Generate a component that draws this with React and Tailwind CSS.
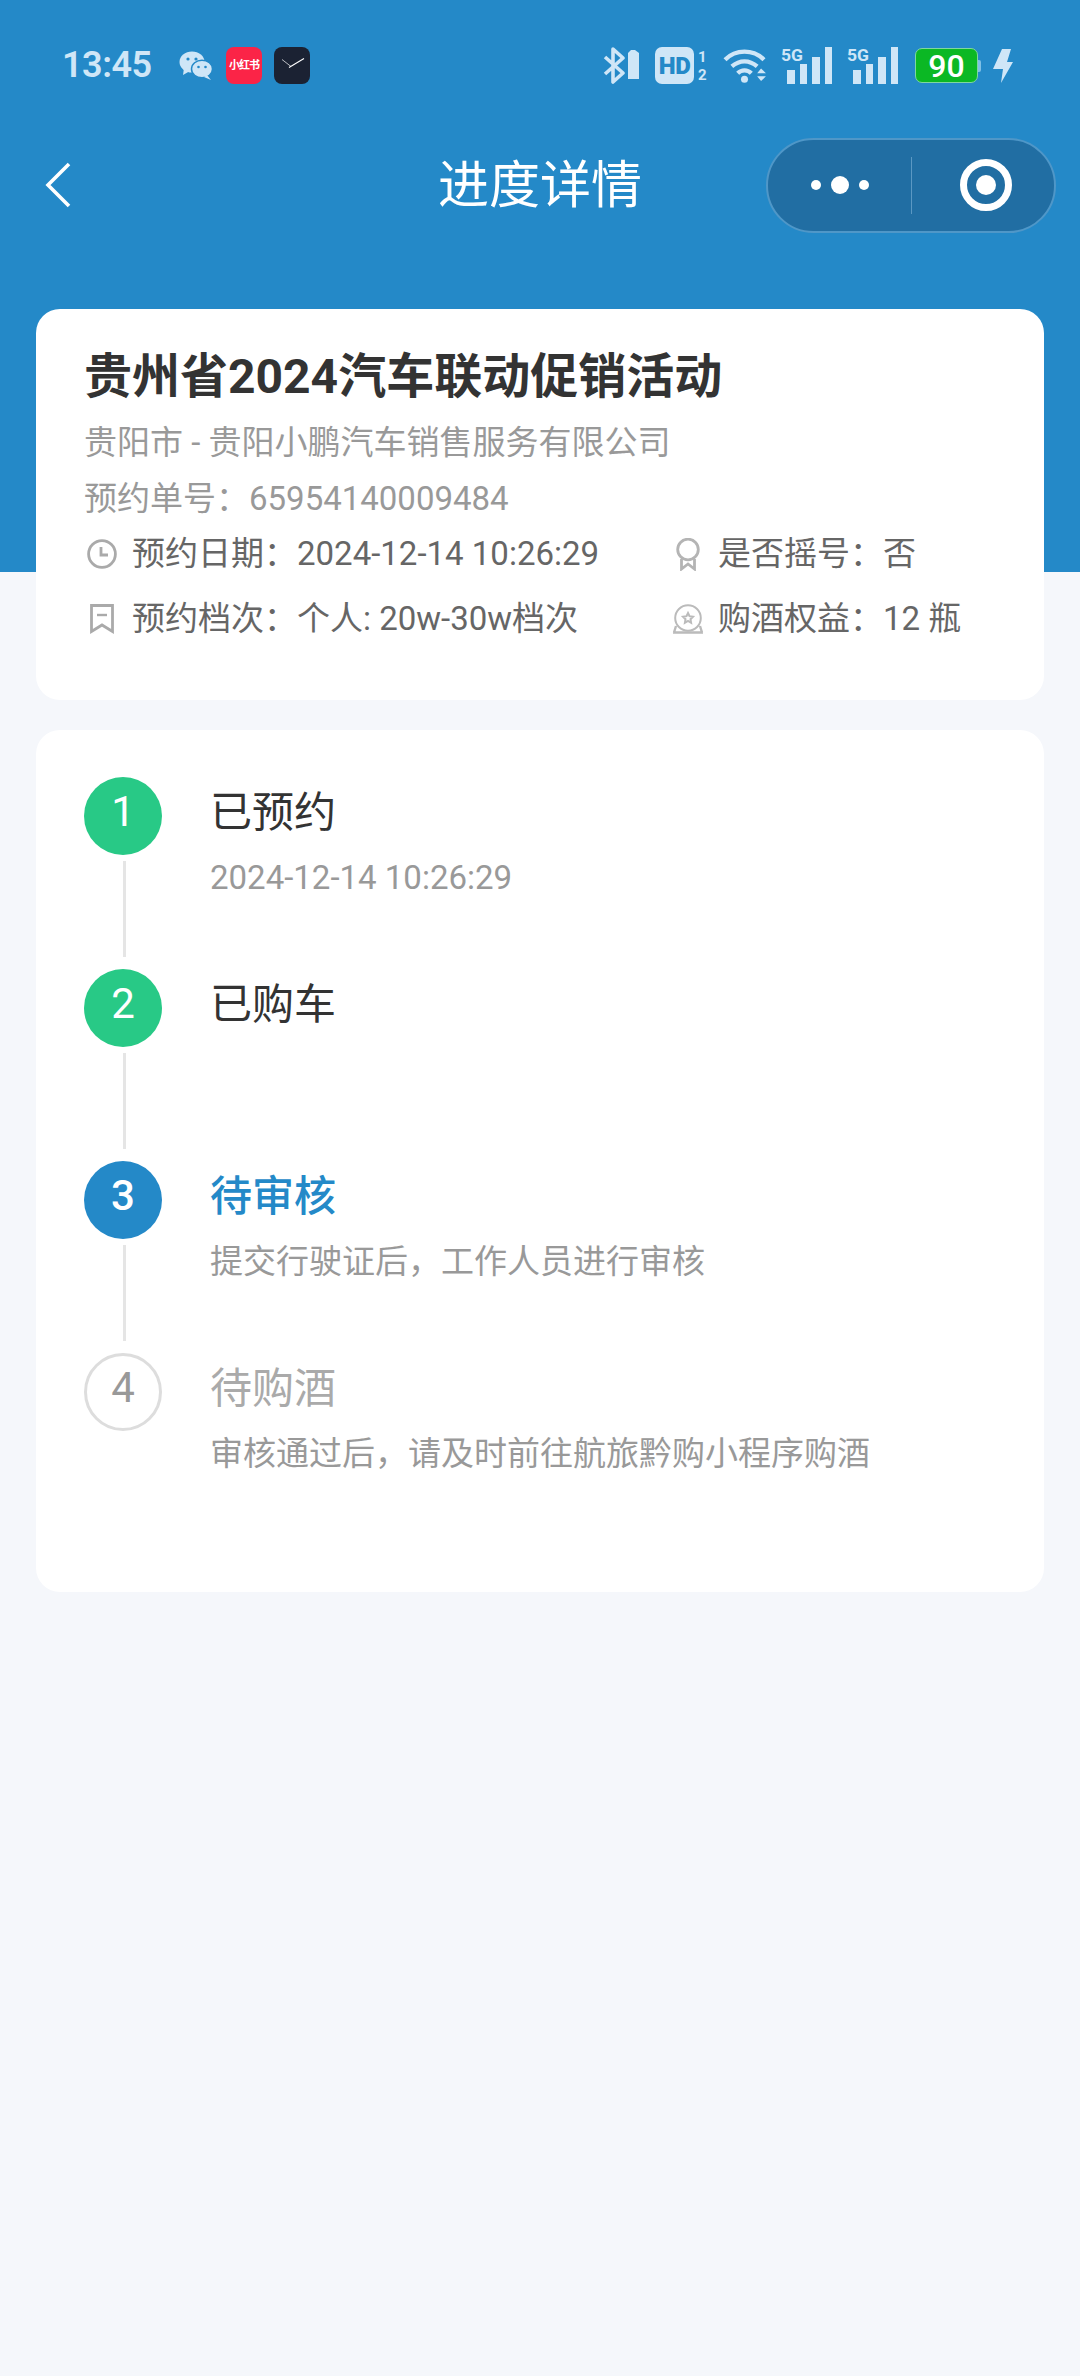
import React from 'react';

const F = { fontFamily: 'Roboto, "Noto Sans CJK SC", sans-serif' };
const SB = '#cfe6f7';

function Signal() {
  return (
    <svg width="52" height="37" viewBox="0 0 52 37" className="ml-[14px] overflow-visible">
      <text x="0" y="14" fontSize="17" fontWeight="700" fontFamily="Roboto" textLength="22" lengthAdjust="spacingAndGlyphs" fill={SB}>5G</text>
      <rect x="6" y="23" width="8" height="14" fill={SB} />
      <rect x="19" y="17" width="7" height="20" fill={SB} />
      <rect x="31" y="10" width="8" height="27" fill={SB} />
      <rect x="44" y="0" width="7" height="37" fill={SB} />
    </svg>
  );
}

function StatusBar() {
  return (
    <div className="h-[110px] pt-[47px] pl-[62px] pr-[67px] flex items-start justify-between">
      <div className="flex items-center h-[37px]">
        <span className="text-[36px] leading-[37px] font-semibold text-[#cfe6f7] w-[117px] tracking-[-0.5px]">13:45</span>
        <svg width="34" height="30" viewBox="0 0 34 30">
          <ellipse cx="13" cy="11" rx="12.5" ry="10.5" fill={SB} />
          <path d="M5 17 L4 24 L11 20Z" fill={SB} />
          <ellipse cx="23" cy="18" rx="10.5" ry="8.8" fill={SB} stroke="#2489c8" strokeWidth="1.5" />
          <path d="M28 24 L32 29 L25 26Z" fill={SB} />
          <circle cx="9" cy="8" r="1.6" fill="#2489c8" /><circle cx="17" cy="8" r="1.6" fill="#2489c8" />
          <circle cx="19.5" cy="16" r="1.3" fill="#2489c8" /><circle cx="26.5" cy="16" r="1.3" fill="#2489c8" />
        </svg>
        <div className="ml-[13px] w-[36px] h-[37px] rounded-[8px] bg-[#fb2447] flex items-center justify-center text-white text-[11px] font-bold leading-none whitespace-nowrap tracking-[-1px]">小红书</div>
        <div className="ml-[12px] w-[36px] h-[37px] rounded-[8px] bg-[#1b2233]">
          <svg width="36" height="37" viewBox="0 0 36 37">
            <path d="M15 20.5 L30 11.5" stroke="#fff" strokeWidth="1.1" />
            <path d="M17 19.5 L8 12.5" stroke="#fff" strokeWidth="0.7" />
          </svg>
        </div>
      </div>
      <div className="flex items-center h-[37px]">
        <svg width="36" height="37" viewBox="0 0 36 37">
          <path d="M2 10 L20 26 L10 35 L10 2 L20 11 L2 27" fill="none" stroke={SB} strokeWidth="3.6" strokeLinejoin="round" />
          <path d="M25 6 L28 3 H32 L36 6 V32 H25Z" fill={SB} />
        </svg>
        <div className="ml-[16px] w-[39px] h-[37px] rounded-[7px] bg-[#cfe6f7] flex items-center justify-center text-[#2489c8] text-[24px] leading-none font-black tracking-[-0.5px]">HD</div>
        <div className="ml-[4px] w-[10px] flex flex-col text-[#cfe6f7] text-[15px] leading-[18px] font-bold"><span>1</span><span>2</span></div>
        <svg width="45" height="37" viewBox="0 0 46 38" className="ml-[14px]">
          <path d="M3 13 C14 2 32 2 43 13" fill="none" stroke={SB} strokeWidth="4.4" />
          <path d="M10 20 C18 13 28 13 36 20" fill="none" stroke={SB} strokeWidth="4.4" />
          <path d="M16 27 C20 23 26 23 30 27" fill="none" stroke={SB} strokeWidth="4.4" />
          <circle cx="23" cy="33" r="3.6" fill={SB} />
          <path d="M36 27 L40 22 L45 27Z M36 30 H45 L40 35Z" fill={SB} />
        </svg>
        <Signal />
        <Signal />
        <div className="ml-[16px] w-[63px] h-[35px] rounded-[7px] bg-[#0bb824] border border-[#7fd6a0] flex items-center justify-center text-white text-[32px] leading-none font-medium">90</div>
        <div className="w-[3px] h-[12px] rounded-r-[2px] bg-[#7fc0e6]" />
        <svg width="20" height="36" viewBox="0 0 20 34" className="ml-[12px]">
          <path d="M9 0 H18 L14 13 H20 L8 34 L10 20 H0Z" fill={SB} />
        </svg>
      </div>
    </div>
  );
}

function NavBar() {
  return (
    <div className="h-[150px] grid grid-cols-[1fr_auto_1fr] items-center">
      <svg width="28" height="48" viewBox="0 0 28 48" className="ml-[44px]">
        <path d="M25 3 L4 24 L25 45" fill="none" stroke="#fff" strokeWidth="3.6" />
      </svg>
      <span className="text-white text-[51px] leading-none">进度详情</span>
      <div className="justify-self-end mr-[24px] w-[290px] h-[95px] rounded-full bg-[#216ea3] border-2 border-[#4f97c8] flex items-center">
        <div className="w-[143px] flex items-center justify-center gap-[10px]">
          <span className="w-[10px] h-[10px] rounded-full bg-white" />
          <span className="w-[18px] h-[18px] rounded-full bg-white" />
          <span className="w-[10px] h-[10px] rounded-full bg-white" />
        </div>
        <div className="w-[1px] h-[57px] bg-[#5b98c3]" />
        <div className="flex-1 flex items-center justify-center pl-[5px]">
          <div className="w-[52px] h-[52px] rounded-full border-[7px] border-white flex items-center justify-center">
            <span className="w-[20px] h-[20px] rounded-full bg-white" />
          </div>
        </div>
      </div>
    </div>
  );
}

function Meta({ icon, label, value }) {
  return (
    <div className="flex items-center text-[33px] leading-[44px] text-[#666] whitespace-nowrap">
      <span className="w-[36px] flex justify-center mr-[12px]">{icon}</span>
      <span>{label}：</span><span>{value}</span>
    </div>
  );
}

const iconColor = '#aaaaaa';
const ClockIcon = (
  <svg width="30" height="30" viewBox="0 0 30 30" fill="none" stroke={iconColor} strokeWidth="2.8">
    <circle cx="15" cy="15" r="13.4" /><path d="M14 8 V16 H21" />
  </svg>
);
const MedalIcon = (
  <svg width="24" height="33" viewBox="0 0 24 33" fill="none" stroke="#b4b4b4" strokeWidth="2.8">
    <circle cx="12" cy="11.5" r="10.3" /><path d="M5.5 21 V31 L12 26 L18.5 31 V21" />
  </svg>
);
const BookmarkIcon = (
  <svg width="24" height="30" viewBox="0 0 24 30" fill="none" stroke={iconColor} strokeWidth="2.8">
    <path d="M1.5 1.5 H22.5 V27.5 L12 21 L1.5 27.5Z" /><path d="M7 11 H17" strokeWidth="2.4" />
  </svg>
);
const CrownIcon = (
  <svg width="32" height="30" viewBox="0 0 32 30" fill="none" stroke="#bbbbbb" strokeWidth="2">
    <circle cx="16" cy="14" r="12.8" />
    <path d="M16 9 L17.5 12.2 L21 12.7 L18.5 15.2 L19.1 18.8 L16 17 L12.9 18.8 L13.5 15.2 L11 12.7 L14.5 12.2Z" />
    <path d="M1 28.5 H31 M4 22 L2 28.5 M28 22 L30 28.5" strokeWidth="2.4" />
  </svg>
);

function Step({ n, kind, title, sub, last }) {
  const circle = {
    done: 'bg-[#28c986] text-white font-normal',
    cur: 'bg-[#2489c8] text-white font-medium',
    todo: 'bg-white border-[3px] border-[#dddddd] text-[#999]',
  }[kind];
  const titleCls = { done: 'text-[#333]', cur: 'text-[#2489c8] font-medium', todo: 'text-[#aaa]' }[kind];
  return (
    <div className="flex h-[192px]">
      <div className="w-[78px] flex flex-col items-center">
        <div className={`w-[78px] h-[78px] rounded-full flex items-center justify-center text-[42px] leading-none pb-[8px] ${circle}`}>{n}</div>
        {!last && <div className="w-[3px] h-[96px] mt-[6px] ml-[2px] bg-[#e5e5e5]" />}
      </div>
      <div className="ml-[48px] flex flex-col">
        <div className={`text-[42px] leading-[60px] mt-[6px] ${titleCls}`}>{title}</div>
        {sub && <div className="text-[33px] leading-[46px] mt-[12px] text-[#999]">{sub}</div>}
      </div>
    </div>
  );
}

export default function App() {
  return (
    <div className="w-[1080px] h-[2376px] bg-[#f5f7fb] overflow-hidden" style={F}>
      <div className="h-[572px] bg-[#2489c8]">
        <StatusBar />
        <NavBar />
      </div>
      <div className="relative -mt-[263px] mx-[36px]">
        <div className="h-[391px] bg-white rounded-[24px] pl-[48px] pt-[37px]">
          <div className="text-[48px] leading-[62px] font-bold text-[#333]">贵州省2024汽车联动促销活动</div>
          <div className="text-[33px] leading-[46px] mt-[12px] text-[#999]">贵阳市 - 贵阳小鹏汽车销售服务有限公司</div>
          <div className="text-[33px] leading-[46px] mt-[10px] text-[#999]">预约单号：65954140009484</div>
          <div className="grid grid-cols-[586px_1fr] mt-[10px] gap-y-[21px]">
            <Meta icon={ClockIcon} label="预约日期" value="2024-12-14 10:26:29" />
            <Meta icon={MedalIcon} label="是否摇号" value="否" />
            <Meta icon={BookmarkIcon} label="预约档次" value="个人: 20w-30w档次" />
            <Meta icon={CrownIcon} label="购酒权益" value="12 瓶" />
          </div>
        </div>
        <div className="mt-[30px] h-[862px] bg-white rounded-[24px] pl-[48px] pt-[47px]">
          <Step n="1" kind="done" title="已预约" sub="2024-12-14 10:26:29" />
          <Step n="2" kind="done" title="已购车" />
          <Step n="3" kind="cur" title="待审核" sub="提交行驶证后，工作人员进行审核" />
          <Step n="4" kind="todo" title="待购酒" sub="审核通过后，请及时前往航旅黔购小程序购酒" last />
        </div>
      </div>
    </div>
  );
}
